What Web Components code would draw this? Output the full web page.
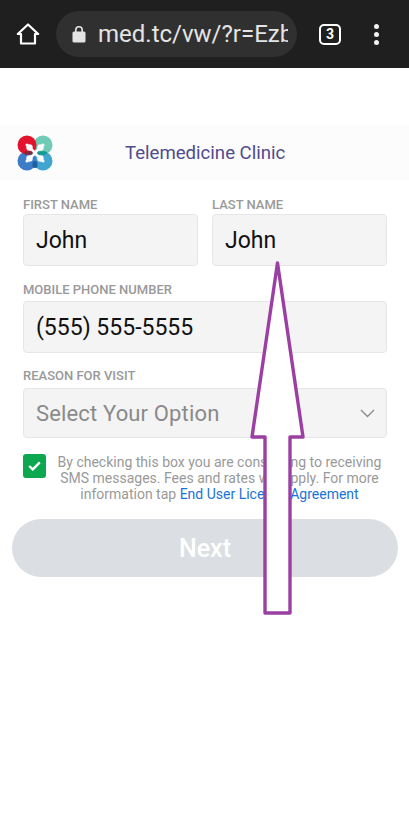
<!DOCTYPE html>
<html>
<head>
<meta charset="utf-8">
<title>Telemedicine Clinic</title>
<style>
html, body { margin: 0; padding: 0; background: #fff; font-family: Roboto, sans-serif; }
body { position: relative; height: 834px; overflow: hidden; }
.row { display: grid; grid-template-columns: 175px 175px; column-gap: 14px; }
main { display: flex; flex-direction: column; padding: 17px 22px 0 23px; row-gap: 16px; }
</style>
</head>
<body>
<browser-bar url="med.tc/vw/?r=EzbQx" tabs="3"></browser-bar>
<clinic-header>Telemedicine Clinic</clinic-header>
<main>
  <div class="row">
    <form-field label="FIRST NAME" value="John" style="--label-gap:1px"></form-field>
    <form-field label="LAST NAME" value="John" style="--label-gap:1px"></form-field>
  </div>
  <form-field label="MOBILE PHONE NUMBER" value="(555) 555-5555"></form-field>
  <form-field label="REASON FOR VISIT" value="Select Your Option" select style="--label-gap:4px;margin-top:-1px"></form-field>
</main>
<consent-row>By checking this box you are consenting to receiving SMS messages. Fees and rates will apply. For more information tap <a slot="link">End User License Agreement</a></consent-row>
<next-button>Next</next-button>
<arrow-note></arrow-note>

<script>
class BrowserBar extends HTMLElement {
    constructor() {
        super();
        this.attachShadow({ mode: 'open' });
    }

    connectedCallback() {
        this.shadowRoot.innerHTML = `
            <style>
            :host { display: flex; align-items: center; height: 68px; background: #1f1f1f; box-sizing: border-box; padding: 0 0 0 16px; }
            .home { width: 24px; height: 24px; flex: none; }
            .pill { display: flex; align-items: center; width: 241px; height: 46px; margin-left: 16px; background: #303030; border-radius: 23px; box-sizing: border-box; padding: 0 9px 0 16px; flex: none; }
            .lock { width: 14px; height: 18px; flex: none; }
            .url { margin-left: 12px; font-size: 24px; color: #e4e4e4; white-space: nowrap; overflow: hidden; }
            .tabs { display: flex; align-items: center; justify-content: center; box-sizing: border-box; width: 22px; height: 21px; margin-left: 22px; border: 2px solid #fff; border-radius: 5px; color: #fff; font-size: 14px; font-weight: 700; flex: none; }
            .dots { display: flex; flex-direction: column; gap: 3px; margin-left: 33px; }
            .dots i { display: block; width: 5px; height: 5px; border-radius: 50%; background: #f2f2f2; }
            </style>
            <svg class="home" viewBox="0 0 24 24" fill="none" stroke="#fff" stroke-width="2.2" stroke-linejoin="round"><path d="M12 2.5 1.8 12H5v9.5h14V12h3.2z"/></svg>
            <div class="pill">
                <svg class="lock" viewBox="0 0 14 18"><path d="M3.8 8V5a3.2 3.2 0 0 1 6.4 0v3" fill="none" stroke="#e4e4e4" stroke-width="1.6"/><rect x="0.5" y="6.5" width="13" height="11" rx="1.5" fill="#e4e4e4"/></svg>
                <span class="url">${this.getAttribute('url')}</span>
            </div>
            <div class="tabs">${this.getAttribute('tabs')}</div>
            <div class="dots"><i></i><i></i><i></i></div>
        `;
    }
}

class ClinicHeader extends HTMLElement {
    constructor() {
        super();
        this.attachShadow({ mode: 'open' });
    }

    connectedCallback() {
        this.shadowRoot.innerHTML = `
            <style>
            :host { display: flex; align-items: center; height: 54px; margin-top: 58px; background: #fcfcfd; padding-left: 17px; }
            svg { width: 36px; height: 36px; flex: none; }
            .title { margin-left: 72px; font-size: 18.6px; color: #4f4b8c; white-space: nowrap; }
            </style>
            <svg viewBox="0 0 36 36" fill="none" stroke-width="8">
                <circle cx="26" cy="10" r="5.5" stroke="#6fcbb5"/>
                <circle cx="26" cy="26" r="5.5" stroke="#41a6cf"/>
                <circle cx="10" cy="26" r="5.5" stroke="#3d7cc9"/>
                <circle cx="10" cy="10" r="5.5" stroke="#e2142d"/>
                <path d="M14 14 22 22M22 14 14 22" stroke="#fcfcfd" stroke-width="3" stroke-linecap="round"/>
                <g fill="#fcfcfd">
                    <circle cx="12.5" cy="12.5" r="3.2"/>
                    <circle cx="23.5" cy="12.5" r="3.2"/>
                    <circle cx="12.5" cy="23.5" r="3.2"/>
                    <circle cx="23.5" cy="23.5" r="3.2"/>
                </g>
                <path d="M9 18h5" stroke="#7a2b3c" stroke-width="3.6" stroke-linecap="round"/>
                <path d="M22 18h6" stroke="#0f9b8e" stroke-width="3.6" stroke-linecap="round"/>
                <path d="M18 28.5v2" stroke="#1f5f9e" stroke-width="5" stroke-linecap="round"/>
            </svg>
            <span class="title"><slot></slot></span>
        `;
    }
}

class FormField extends HTMLElement {
    constructor() {
        super();
        this.attachShadow({ mode: 'open' });
    }

    connectedCallback() {
        const isSelect = this.hasAttribute('select');
        this.shadowRoot.innerHTML = `
            <style>
            :host { display: block; }
            label { display: block; font-size: 13px; line-height: 16px; font-weight: 500; color: #999; margin-bottom: var(--label-gap, 3px); white-space: nowrap; }
            .box { display: flex; align-items: center; justify-content: space-between; box-sizing: border-box; height: ${isSelect ? 50 : 52}px; padding: 0 11px 0 12px; background: #f4f4f4; border: 1px solid #e6e6e6; border-radius: 4px; font-size: ${isSelect ? 22 : 23}px; letter-spacing: ${isSelect ? 0.15 : 0}px; color: ${isSelect ? '#8a8a8a' : '#111'}; white-space: nowrap; }
            svg { width: 15px; height: 9px; }
            </style>
            <label>${this.getAttribute('label')}</label>
            <div class="box">
                <span>${this.getAttribute('value')}</span>
                ${isSelect ? '<svg viewBox="0 0 15 9" fill="none" stroke="#8a8a8a" stroke-width="1.4"><path d="M1 1l6.5 6.5L14 1"/></svg>' : ''}
            </div>
        `;
    }
}

class ConsentRow extends HTMLElement {
    constructor() {
        super();
        this.attachShadow({ mode: 'open' });
    }

    connectedCallback() {
        this.shadowRoot.innerHTML = `
            <style>
            :host { display: flex; align-items: flex-start; margin: 16px 22px 0 23px; }
            .check { display: flex; align-items: center; justify-content: center; width: 23px; height: 24px; background: #0da750; border-radius: 3px; flex: none; }
            svg { width: 13px; height: 10px; }
            .text { flex: 1; margin: 0 0 0 10px; padding-right: 4px; font-size: 14px; line-height: 16px; color: #999; text-align: center; }
            ::slotted(a) { color: #1a73d9; }
            </style>
            <div class="check"><svg viewBox="0 0 13 10" fill="none" stroke="#fff" stroke-width="2.4"><path d="M1.2 5l3.6 3.4 7-7"/></svg></div>
            <p class="text"><slot></slot> <slot name="link"></slot></p>
        `;
    }
}

class NextButton extends HTMLElement {
    constructor() {
        super();
        this.attachShadow({ mode: 'open' });
    }

    connectedCallback() {
        this.shadowRoot.innerHTML = `
            <style>
            :host { display: flex; align-items: center; justify-content: center; height: 58px; margin: 17px 11px 0 12px; background: #dbdfe3; border-radius: 29px; color: #fff; font-size: 25px; font-weight: 500; }
            </style>
            <slot></slot>
        `;
    }
}

class ArrowNote extends HTMLElement {
    constructor() {
        super();
        this.attachShadow({ mode: 'open' });
    }

    connectedCallback() {
        this.shadowRoot.innerHTML = `
            <style>
            :host { position: absolute; left: 0; top: 0; width: 409px; height: 834px; pointer-events: none; }
            svg { display: block; }
            </style>
            <svg width="409" height="834" viewBox="0 0 409 834">
                <path d="M277.5 263 303 437H290V613H265V437H252Z" fill="#fff" stroke="#9b3fa3" stroke-width="3.4" stroke-linejoin="round"/>
            </svg>
        `;
    }
}

customElements.define('browser-bar', BrowserBar);
customElements.define('clinic-header', ClinicHeader);
customElements.define('form-field', FormField);
customElements.define('consent-row', ConsentRow);
customElements.define('next-button', NextButton);
customElements.define('arrow-note', ArrowNote);
</script>
</body>
</html>
